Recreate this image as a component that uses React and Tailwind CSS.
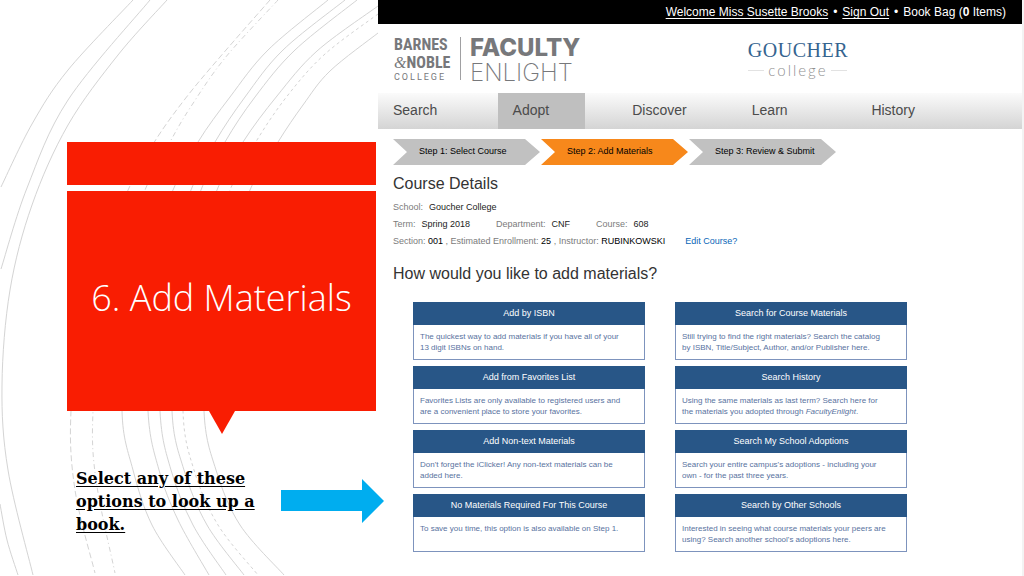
const ARCS = [
  { pts: [[133, 0], [68, 70], [32, 124], [1, 187]] },
  { pts: [[150, 0], [68, 100], [27, 188], [1, 269]] },
  { pts: [[0, 504], [7, 540], [18, 575]] },
  { pts: [[167, 0], [118, 55], [68, 125], [32, 205], [10, 290], [2, 385], [8, 470], [33, 575]] },
  { pts: [[270, 0], [220, 57], [185, 99], [155, 141], [129, 188], [84, 300], [71, 411], [75, 490], [95, 573]], dash: '6 3' },
  { pts: [[278, 0], [225, 58], [190, 108], [170, 142], [145, 190], [103, 300], [93, 411], [96, 480], [115, 573]], dash: '5 3 1 3' },
  { pts: [[328, 0], [268, 50], [230, 97], [198, 142], [173, 190], [128, 300], [122, 411], [133, 470], [152, 525], [185, 575]] },
  { pts: [[345, 0], [283, 50], [245, 97], [215, 142], [191, 190], [150, 300], [148, 411], [159, 470], [178, 520], [209, 575]] },
  { pts: [[357, 0], [295, 50], [255, 97], [225, 142], [201, 190], [162, 300], [160, 411], [171, 470], [193, 525], [226, 575]] },
  { pts: [[378, 6], [317, 51], [277, 96], [243, 142], [217, 190], [176, 300], [172, 411], [184, 470], [207, 525], [244, 575]] },
  { pts: [[378, 14], [325, 54], [288, 95], [257, 140], [230, 190], [188, 300], [183, 411], [194, 470], [218, 525], [258, 575]], dash: '3 3' },
  { pts: [[378, 33], [330, 71], [303, 105], [278, 142], [250, 190], [208, 300], [204, 411], [216, 470], [240, 525], [284, 575]] },
]

function smoothPath(pts) {
  let d = `M${pts[0][0]} ${pts[0][1]}`
  for (let i = 0; i < pts.length - 1; i++) {
    const p0 = pts[i - 1] || pts[i]
    const p1 = pts[i]
    const p2 = pts[i + 1]
    const p3 = pts[i + 2] || p2
    d += ` C${p1[0] + (p2[0] - p0[0]) / 6} ${p1[1] + (p2[1] - p0[1]) / 6} ${p2[0] - (p3[0] - p1[0]) / 6} ${p2[1] - (p3[1] - p1[1]) / 6} ${p2[0]} ${p2[1]}`
  }
  return d
}

function Arcs() {
  return (
    <svg className="absolute left-0 top-0" width="378" height="576" viewBox="0 0 378 576" fill="none" stroke="#d4d4d4" aria-hidden="true">
      {ARCS.map((a, i) => (
        <path key={i} d={smoothPath(a.pts)} strokeDasharray={a.dash} />
      ))}
    </svg>
  )
}

function SlideTitle() {
  return (
    <section className="relative pl-[67px] pt-[142px]">
      <Arcs />
      <div className="relative mr-[2px]">
        <div className="h-[43px] bg-[#f91d02]" />
        <div className="mt-[6px] flex h-[220px] items-center justify-center bg-[#f91d02] pb-[6px]">
          <h1 className="whitespace-nowrap font-['Open_Sans',sans-serif] text-[36px] font-light text-white">6. Add Materials</h1>
        </div>
        <svg className="mx-auto block" width="26" height="23" viewBox="0 0 26 23" aria-hidden="true">
          <path d="M0 0H26L13 23Z" fill="#f91d02" />
        </svg>
      </div>
      <div className="relative z-10 mr-[-6px] mt-[33px] flex items-start pl-[9px]">
        <p className="flex-1 font-['DejaVu_Serif',serif] text-[16px] font-bold leading-[23px] text-black underline underline-offset-2">
          Select any of these<br />options to look up a<br />book.
        </p>
        <svg className="mt-[12px] shrink-0" width="103" height="44" viewBox="0 0 103 44" aria-hidden="true">
          <path d="M0 11H81V0L103 22L81 44V32H0Z" fill="#00adef" />
        </svg>
      </div>
    </section>
  )
}

function Header() {
  return (
    <>
      <div className="flex h-[24px] items-center justify-end gap-[5px] bg-black pr-[16px] text-[12px] text-white">
        <a href="#account" className="underline underline-offset-2">Welcome Miss Susette Brooks</a>
        <span>•</span>
        <a href="#signout" className="underline underline-offset-2">Sign Out</a>
        <span>•</span>
        <a href="#bag">Book Bag (<b>0</b> Items)</a>
      </div>
      <header className="flex h-[69px] items-start justify-between pl-[16px] pr-[174px] pt-[11px]">
        <a href="#home" className="flex text-[#77787b]">
          <span className="flex w-[58px] flex-col pt-px font-['Roboto_Condensed','Liberation_Sans',sans-serif] text-[16px] font-bold leading-[18px]">
            <span>BARNES</span>
            <span className="whitespace-nowrap"><i className="font-['Liberation_Serif',serif] font-normal">&amp;</i>NOBLE</span>
            <span className="font-['Roboto',sans-serif] text-[9px] font-normal leading-[11px] tracking-[2px]">COLLEGE</span>
          </span>
          <span className="ml-[8px] mt-[2px] h-[43px] w-px bg-[#a0a0a2]" />
          <span className="ml-[9px] flex flex-col font-['Inter',sans-serif] text-[24px] leading-[25px]">
            <span className="font-extrabold">FACULTY</span>
            <span className="font-extralight">ENLIGHT</span>
          </span>
        </a>
        <a href="#college" className="mt-[4px] flex flex-col items-center">
          <span className="font-['Liberation_Serif',serif] text-[20px] leading-[22px] tracking-wide text-[#35648f]">GOUCHER</span>
          <span className="flex items-center gap-[4px] font-['Lato',sans-serif] text-[15px] font-light leading-[18px] tracking-[2px] text-[#8f8f8f]">
            <span className="h-px w-[16px] bg-[#e2e2e2]" />
            college
            <span className="h-px w-[16px] bg-[#e2e2e2]" />
          </span>
        </a>
      </header>
    </>
  )
}

const NAV = ['Search', 'Adopt', 'Discover', 'Learn', 'History']

function Nav() {
  return (
    <nav className="flex h-[36px] bg-linear-to-b from-[#fbfbfb] to-[#d4d4d4] pr-[46px] text-[14px] text-[#4b4b4b]">
      {NAV.map((n) => (
        <div key={n} className="flex flex-1">
          <a href={`#${n.toLowerCase()}`} className={n === 'Adopt' ? 'flex w-[87px] items-center bg-[#bfbfbf] pb-[2px] pl-[15px]' : 'flex items-center pb-[2px] pl-[15px]'}>{n}</a>
        </div>
      ))}
    </nav>
  )
}

const STEPS = ['Step 1: Select Course', 'Step 2: Add Materials', 'Step 3: Review & Submit']

function Steps() {
  return (
    <ol className="flex gap-px pt-[10px] text-[9px] text-black">
      {STEPS.map((s, i) => (
        <li key={s} className={i === 1 ? 'flex h-[26px] w-[147px] items-center bg-[#f7881b] pl-[26px] [clip-path:polygon(0_0,132px_0,100%_50%,132px_100%,0_100%,14px_50%)]' : 'flex h-[26px] w-[147px] items-center bg-[#c1c1c1] pl-[26px] [clip-path:polygon(0_0,132px_0,100%_50%,132px_100%,0_100%,14px_50%)]'}>
          {s}
        </li>
      ))}
    </ol>
  )
}

function Field({ label, children }) {
  return (
    <div className="flex gap-[6px]">
      <dt>{label}</dt>
      <dd className="text-[#222]">{children}</dd>
    </div>
  )
}

function Details() {
  return (
    <div className="text-[9px] leading-[17px] text-[#7b7b7b]">
      <h2 className="mt-[9px] text-[16px] leading-[20px] text-[#333]">Course Details</h2>
      <dl className="mt-[5px]">
        <Field label="School:">Goucher College</Field>
        <div className="flex gap-[26px]">
          <Field label="Term:">Spring 2018</Field>
          <Field label="Department:">CNF</Field>
          <Field label="Course:">608</Field>
        </div>
      </dl>
      <p>
        Section: <span className="text-black">001</span> , Estimated Enrollment: <span className="text-black">25</span> , Instructor: <span className="text-black">RUBINKOWSKI</span>
        <a href="#edit" className="ml-[20px] text-[#0a66b7]">Edit Course?</a>
      </p>
    </div>
  )
}

const OPTIONS = [
  ['Add by ISBN', 'The quickest way to add materials if you have all of your', '13 digit ISBNs on hand.'],
  ['Search for Course Materials', 'Still trying to find the right materials? Search the catalog', 'by ISBN, Title/Subject, Author, and/or Publisher here.'],
  ['Add from Favorites List', 'Favorites Lists are only available to registered users and', 'are a convenient place to store your favorites.'],
  ['Search History', 'Using the same materials as last term? Search here for', <>the materials you adopted through <i>FacultyEnlight</i>.</>],
  ['Add Non-text Materials', "Don't forget the iClicker! Any non-text materials can be", 'added here.'],
  ['Search My School Adoptions', "Search your entire campus's adoptions - including your", 'own - for the past three years.'],
  ['No Materials Required For This Course', 'To save you time, this option is also available on Step 1.', ''],
  ['Search by Other Schools', 'Interested in seeing what course materials your peers are', "using? Search another school's adoptions here."],
]

function Options() {
  return (
    <div className="ml-[20px] mt-[18px] grid max-w-[494px] grid-cols-2 gap-x-[30px] gap-y-[6px]">
      {OPTIONS.map(([title, a, b]) => (
        <a key={title} href="#option" className="block min-h-[58px] border border-[#7d93bd] bg-white">
          <h3 className="-mx-px -mt-px flex h-[23px] items-center justify-center bg-[#285687] text-[9px] text-white">{title}</h3>
          <p className="whitespace-nowrap px-[6px] pt-[6px] text-[8px] leading-[11px] text-[#5872a0]">
            {a}<br />{b}
          </p>
        </a>
      ))}
    </div>
  )
}

export default function App() {
  return (
    <div className="grid min-h-screen grid-cols-[378px_1fr] bg-white font-['Liberation_Sans',Arial,sans-serif]">
      <SlideTitle />
      <main className="border-r-2 border-[#f3f3f3]">
        <Header />
        <Nav />
        <div className="px-[15px]">
          <Steps />
          <Details />
          <h2 className="mt-[14px] text-[16px] leading-[20px] text-[#333]">How would you like to add materials?</h2>
          <Options />
        </div>
      </main>
    </div>
  )
}
